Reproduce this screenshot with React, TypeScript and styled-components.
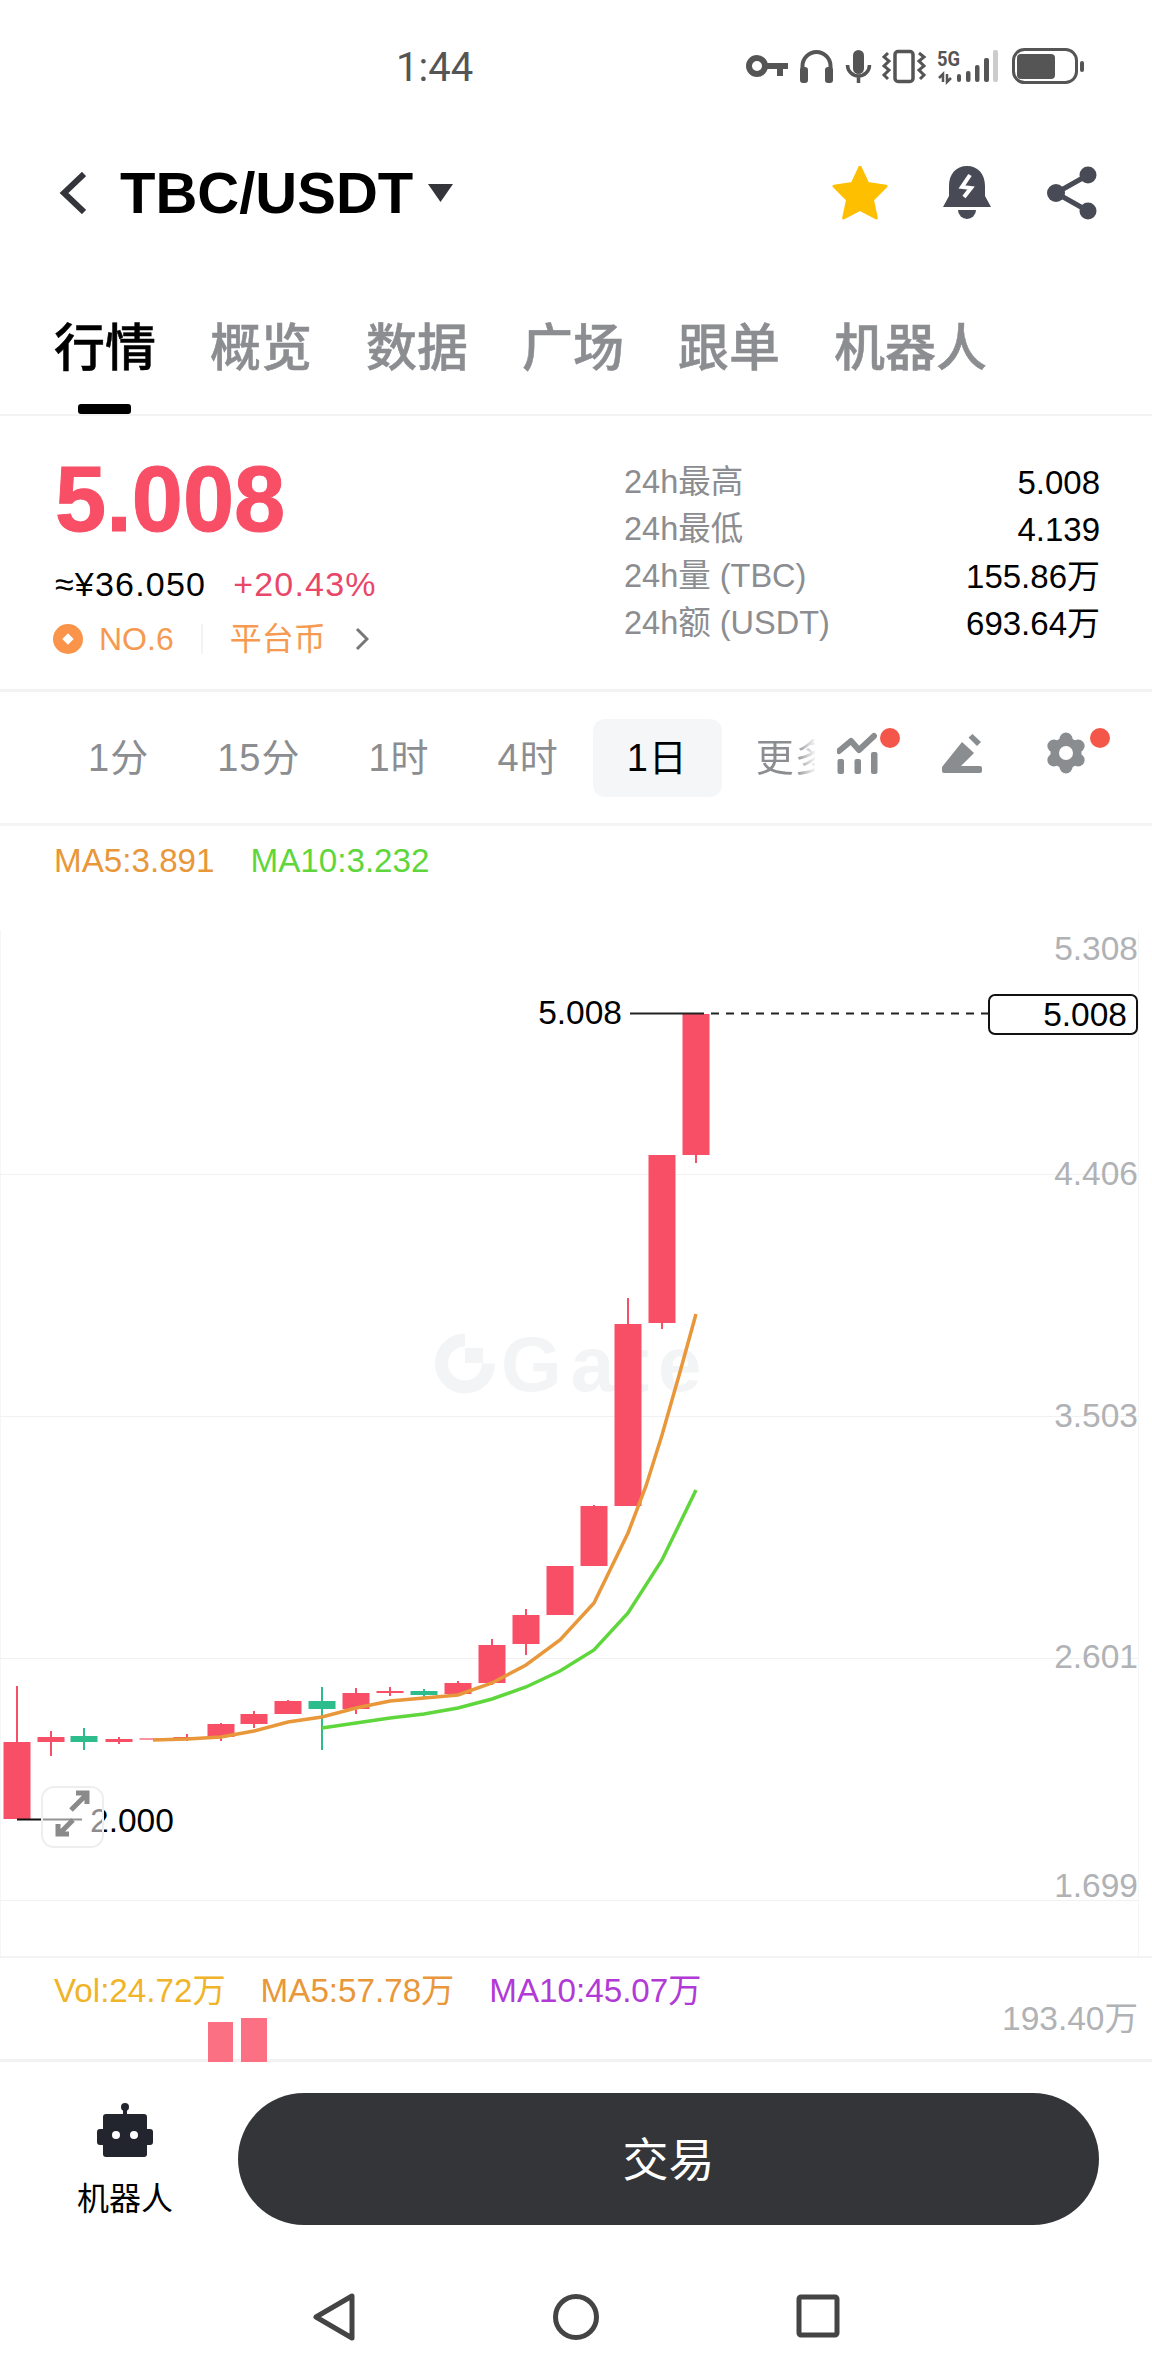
import React from 'react'
import styled, { createGlobalStyle } from 'styled-components'

const RED = '#f84e66'
const GREEN = '#2dbd8c'
const ORANGE = '#e8973a'
const LIME = '#5fd63c'
const TOOL_GREY = '#8a8d90'
const SANS = '"Liberation Sans", "Noto Sans CJK SC", sans-serif'

const GlobalStyle = createGlobalStyle`
  html, body {
    margin: 0;
    padding: 0;
    background: #fff;
    font-family: ${SANS};
  }
  * {
    box-sizing: border-box;
  }
`

const Page = styled.div`
  width: 1152px;
  height: 2376px;
  overflow: hidden;
  background: #fff;
  display: flex;
  flex-direction: column;
`

/* status bar */
const StatusBar = styled.div`
  height: 120px;
  padding: 44px 62px 0 396px;
  display: flex;
  justify-content: space-between;
  align-items: flex-start;
`

const Clock = styled.span`
  font-family: Roboto, sans-serif;
  font-size: 40px;
  line-height: 47px;
  color: #555;
`

const StatusIcons = () => (
  <svg width="345" height="45" viewBox="745 45 345 45" fill="#555">
    {/* key */}
    <circle cx="757" cy="67" r="8" fill="none" stroke="#555" strokeWidth="6" />
    <path d="M766 64h22v6h-5v7h-6v-7h-11z" />
    {/* headphones */}
    <path d="M802.5 72v-5a14 14 0 0 1 28 0v5" fill="none" stroke="#555" strokeWidth="4" />
    <rect x="800" y="68" width="8" height="16" rx="3" />
    <rect x="825" y="68" width="8" height="16" rx="3" />
    {/* mic */}
    <rect x="853" y="51" width="11" height="24" rx="5.5" />
    <path d="M847.5 66a11 11 0 0 0 22 0M858.5 77v7" fill="none" stroke="#555" strokeWidth="3.5" />
    {/* vibrate */}
    <rect x="895" y="52.5" width="18" height="30" rx="3" fill="none" stroke="#555" strokeWidth="3.5" />
    <path
      d="M888 54l-4 4 5 4-5 5 5 4-5 5 4 4M919 54l5 4-5 4 5 5-5 4 5 5-4 4"
      fill="none"
      stroke="#555"
      strokeWidth="3"
    />
    {/* network */}
    <text x="937" y="67" fontFamily="Roboto, sans-serif" fontWeight="700" fontSize="20" textLength="23" lengthAdjust="spacingAndGlyphs">
      5G
    </text>
    <path d="M943 83v-8l-4 4M947 75v8l4-4" fill="none" stroke="#555" strokeWidth="2.5" />
    <rect x="957" y="75" width="4" height="8" rx="2" />
    <rect x="966" y="72" width="4.5" height="11" rx="2" />
    <rect x="975" y="66" width="4.5" height="17" rx="2" />
    <rect x="984" y="59" width="5" height="24" rx="2" />
    <rect x="993" y="51" width="5" height="32" rx="2" fill="#ccc" />
    {/* battery */}
    <rect x="1013.5" y="50.5" width="63" height="33" rx="11" fill="none" stroke="#555" strokeWidth="3" />
    <rect x="1017" y="55" width="38" height="25" rx="4" />
    <rect x="1080" y="62" width="4" height="11" rx="2" />
  </svg>
)

/* header */
const Header = styled.header`
  height: 140px;
  padding: 6px 54px 0 59px;
  display: flex;
  align-items: center;
`

const Pair = styled.h1`
  margin: 0 0 0 34px;
  font-size: 58px;
  line-height: 64px;
  font-weight: 700;
  color: #000;
`

const Actions = styled.div`
  margin-left: auto;
  display: flex;
  align-items: center;
  gap: 55px;
`

const BackIcon = () => (
  <svg width="27" height="42" viewBox="0 0 27 42" fill="none" stroke="#33353a" strokeWidth="6">
    <path d="M25 2L5 21l20 19" />
  </svg>
)

const CaretIcon = () => (
  <svg width="25" height="18" viewBox="0 0 25 18" fill="#33353a" style={{ marginLeft: 15 }}>
    <path d="M0 0h25L12.5 18z" />
  </svg>
)

const StarIcon = () => (
  <svg width="56" height="54" viewBox="0 0 58 56" fill="#fdbf00">
    <path
      d="M29 1l8 17 19 3-14 14 4 19-17-9-17 9 4-19L2 21l19-3z"
      stroke="#fdbf00"
      strokeWidth="3"
      strokeLinejoin="round"
    />
  </svg>
)

const BellIcon = () => (
  <svg width="48" height="54" viewBox="0 0 48 54" fill="#484b55">
    <path d="M24 0c11 0 18 8 18 20v10l6 11H0l6-11V20C6 8 13 0 24 0z" />
    <path d="M15 44h18a9 9 0 0 1-18 0z" />
    <path d="M27 9l-8 12 9 1-7 9" fill="none" stroke="#fff" strokeWidth="4" />
  </svg>
)

const ShareIcon = () => (
  <svg width="52" height="54" viewBox="0 0 52 54" fill="#484b55">
    <path d="M42 9L10 27l32 18" fill="none" stroke="#484b55" strokeWidth="5" />
    <circle cx="42" cy="9" r="8.5" />
    <circle cx="10" cy="27" r="9" />
    <circle cx="42" cy="45" r="8.5" />
  </svg>
)

/* tabs */
const TabBar = styled.nav`
  height: 156px;
  padding: 0 0 0 54px;
  display: flex;
  gap: 54px;
  border-bottom: 2px solid #f3f3f3;
`

const Tab = styled.div<{ $active?: boolean }>`
  position: relative;
  font-size: 51px;
  line-height: 72px;
  padding-top: 53px;
  font-weight: 500;
  -webkit-text-stroke: 0.5px currentColor;
  color: ${(p) => (p.$active ? '#000' : '#8b8d91')};
  ${(p) =>
    p.$active &&
    `
    &::after {
      content: '';
      position: absolute;
      left: 24px;
      bottom: 0;
      width: 53px;
      height: 10px;
      border-radius: 3px;
      background: #000;
    }
  `}
`

/* price summary */
const Summary = styled.section`
  height: 276px;
  padding: 0 52px 0 55px;
  display: flex;
  justify-content: space-between;
  border-bottom: 3px solid #f2f2f2;
`

const PriceColumn = styled.div`
  display: flex;
  flex-direction: column;
`

const Price = styled.div`
  font-size: 92px;
  line-height: 100px;
  font-weight: 700;
  color: ${RED};
  margin-top: 33px;
  -webkit-text-stroke: 1px ${RED};
`

const SubPrice = styled.div`
  margin-top: 10px;
  display: flex;
  gap: 27px;
  font-size: 34px;
  letter-spacing: 1.2px;
  line-height: 50px;
  color: #000;
`

const Change = styled.span`
  color: #e8476a;
`

const Rank = styled.div`
  margin-top: 8px;
  display: flex;
  align-items: center;
  font-size: 32px;
  line-height: 44px;
  color: #f59a50;
`

const RankDot = styled.span`
  width: 30px;
  height: 30px;
  margin: 0 16px 0 -2px;
  border-radius: 50%;
  background: #f9944a;
  display: flex;
  align-items: center;
  justify-content: center;
  &::after {
    content: '';
    width: 8px;
    height: 8px;
    background: #fff;
    transform: rotate(45deg);
  }
`

const RankSep = styled.span`
  width: 2px;
  height: 30px;
  margin: 0 27px;
  background: #f3f3f3;
`

const StatGrid = styled.dl`
  margin: 43px 0 0;
  width: 476px;
  display: grid;
  grid-template-columns: 1fr auto;
  grid-auto-rows: 47px;
  align-items: center;
  line-height: 47px;
`

const StatLabel = styled.dt`
  font-size: 32.5px;
  color: #8b8d91;
`

const StatValue = styled.dd`
  margin: 0;
  font-size: 33px;
  text-align: right;
  color: #000;
`

/* interval toolbar */
const Toolbar = styled.div`
  height: 134px;
  padding: 27px 0 0 54px;
  display: flex;
  align-items: flex-start;
  border-bottom: 3px solid #f4f4f4;
`

const Intervals = styled.div`
  width: 761px;
  height: 78px;
  overflow: hidden;
  display: flex;
`

const Interval = styled.div<{ $active?: boolean; $faded?: boolean }>`
  flex: none;
  height: 78px;
  padding: 0 34px;
  border-radius: 12px;
  font-size: 38px;
  letter-spacing: 1px;
  line-height: 78px;
  color: ${(p) => (p.$active ? '#000' : '#8b8d91')};
  background: ${(p) => (p.$active ? '#f4f6f8' : 'transparent')};
  ${(p) =>
    p.$faded &&
    `
    -webkit-mask-image: linear-gradient(90deg, #000 50%, transparent 65%);
    mask-image: linear-gradient(90deg, #000 50%, transparent 65%);
  `}
`

const Tools = styled.div`
  margin-left: 22px;
  display: flex;
  gap: 40px;
`

const IndicatorIcon = () => (
  <svg width="65" height="66" viewBox="837 725 65 66" fill={TOOL_GREY}>
    <path
      d="M839 757l12-10 8 9 15-14"
      fill="none"
      stroke={TOOL_GREY}
      strokeWidth="6"
      strokeLinecap="round"
      strokeLinejoin="round"
    />
    <rect x="837.5" y="765" width="6.5" height="15" rx="2" />
    <rect x="854.5" y="765" width="6.5" height="15" rx="2" />
    <rect x="871" y="758" width="6.5" height="22" rx="2" />
    <circle cx="890" cy="744" r="10" fill="#f4574a" />
  </svg>
)

const PenIcon = () => (
  <svg width="40" height="66" viewBox="942 725 40 66" fill={TOOL_GREY} style={{ marginRight: 25 }}>
    <path d="M968.5 743.5l4-3.5 8.5 8-4 4zM962 748l12 11-13 13h19a2 2 0 0 1 2 2v3a2 2 0 0 1-2 2h-36a2 2 0 0 1-2-2v-4z" />
  </svg>
)

const gearLobes = [-90, -30, 30, 90, 150, 210]

const GearIcon = () => (
  <svg width="65" height="66" viewBox="1047 725 65 66" fill={TOOL_GREY}>
    <circle cx="1066" cy="759" r="15.5" />
    {gearLobes.map((a) => (
      <circle
        key={a}
        cx={1066 + 14 * Math.cos((a * Math.PI) / 180)}
        cy={759 + 14 * Math.sin((a * Math.PI) / 180)}
        r="6.5"
      />
    ))}
    <circle cx="1066" cy="759" r="7" fill="#fff" />
    <circle cx="1100" cy="744" r="10" fill="#f4574a" />
  </svg>
)

/* chart */
const Legend = styled.div<{ $gap: number }>`
  display: flex;
  gap: ${(p) => p.$gap}px;
  padding-left: 54px;
  font-size: 33.2px;
  line-height: 40px;
`

const LegendItem = styled.span<{ $color: string }>`
  color: ${(p) => p.$color};
`

const MaRow = styled(Legend)`
  height: 76px;
  padding-top: 15px;
`

const CandleChart = styled.svg`
  display: block;
  flex: none;
`

const VolumePanel = styled.div`
  position: relative;
  height: 106px;
  padding-top: 13px;
  border-top: 2px solid #f3f3f3;
  border-bottom: 3px solid #f2f2f2;
`

const VolumeBars = styled.svg`
  position: absolute;
  left: 0;
  top: 0;
`

type Candle = [number, number, number, number, number, boolean?, number?]

// x, body top, body bottom, wick top, wick bottom, falling, opacity
const candles: Candle[] = [
  [17, 1742, 1819, 1686, 1819],
  [51, 1737, 1742, 1731, 1756],
  [84, 1736, 1742, 1728, 1750, true],
  [119, 1739, 1742, 1737, 1744],
  [153, 1738, 1740, 1738, 1740, false, 0.6],
  [187, 1737, 1739, 1734, 1741],
  [221, 1724, 1737, 1723, 1741],
  [254, 1714, 1724, 1711, 1728],
  [288, 1701, 1714, 1700, 1714],
  [322, 1701, 1709, 1687, 1750, true],
  [356, 1693, 1709, 1688, 1714],
  [390, 1691, 1693, 1687, 1696],
  [424, 1691, 1695, 1689, 1697, true],
  [458, 1683, 1694, 1681, 1696],
  [492, 1645, 1683, 1639, 1685],
  [526, 1615, 1644, 1609, 1655],
  [560, 1566, 1615, 1566, 1615],
  [594, 1506, 1566, 1505, 1566],
  [628, 1324, 1506, 1298, 1506],
  [662, 1155, 1323, 1155, 1329],
  [696, 1014, 1155, 1014, 1163],
]

const ma5 =
  '153,1740 187,1739 221,1737 254,1731 288,1722 322,1717 356,1708 390,1701 424,1698 458,1695 492,1683 526,1665 560,1640 594,1603 628,1533 646,1486 662,1435 680,1372 696,1314'
const ma10 =
  '322,1728 356,1723 390,1718 424,1714 458,1708 492,1699 526,1687 560,1671 594,1650 628,1613 662,1560 696,1490'

const gridLines = [1174, 1416, 1658, 1900]
const axisLabels: [string, number][] = [
  ['5.308', 949],
  ['4.406', 1174],
  ['3.503', 1416],
  ['2.601', 1657],
  ['1.699', 1886],
]

const PriceChart = () => (
  <CandleChart width="1152" height="1054" viewBox="0 902 1152 1054" fontFamily={SANS}>
    <path d="M0.5 930V1956M1138.5 930V1956" stroke="#f6f6f6" />
    {gridLines.map((y) => (
      <path key={y} d={`M0 ${y + 0.5}H1138`} stroke="#f1f1f1" />
    ))}
    {/* watermark */}
    <path d="M465 1340a23.5 23.5 0 1 0 23.5 23.5" fill="none" stroke="#f3f4f5" strokeWidth="13" />
    <rect x="465" y="1348" width="18" height="15" fill="#f3f4f5" />
    <text x="501" y="1391" fontSize="78" fontWeight="700" letterSpacing="9" fill="#f3f4f5">
      Gate
    </text>
    {axisLabels.map(([label, y]) => (
      <text key={label} x="1138" y={y + 11} fontSize="33.5" fill="#b0b2b5" textAnchor="end">
        {label}
      </text>
    ))}
    {candles.map(([x, top, bottom, wickTop, wickBottom, falling, opacity]) => {
      const color = falling ? GREEN : RED
      return (
        <g key={x} fill={color} opacity={opacity}>
          <rect x={x - 1} y={wickTop} width="2" height={wickBottom - wickTop} />
          <rect x={x - 13.5} y={top} width="27" height={bottom - top} />
        </g>
      )
    })}
    <polyline points={ma5} fill="none" stroke={ORANGE} strokeWidth="3.5" />
    <polyline points={ma10} fill="none" stroke={LIME} strokeWidth="3.5" />
    {/* high marker */}
    <text x="622" y="1024" fontSize="33.5" fill="#000" textAnchor="end">
      5.008
    </text>
    <path d="M630 1013.5H696" stroke="#222" strokeWidth="2" />
    <path d="M696 1013.5H988" stroke="#222" strokeWidth="2" strokeDasharray="8 7" />
    <rect x="989" y="995" width="148" height="39" rx="6" fill="#fff" stroke="#111" strokeWidth="2" />
    <text x="1127" y="1026" fontSize="33.5" fill="#000" textAnchor="end">
      5.008
    </text>
    {/* low marker */}
    <path d="M17 1819.5H82" stroke="#111" strokeWidth="2" />
    <text x="90" y="1832" fontSize="33.5" fill="#000">
      2.000
    </text>
    {/* expand button */}
    <rect x="42" y="1787" width="61" height="60" rx="12" fill="#fff" fillOpacity="0.55" stroke="#eee" strokeWidth="2" />
    <path
      d="M71 1810l15-15M76 1793h11v11M73 1820l-13 13M58 1824v10h11"
      fill="none"
      stroke="#8a8a8a"
      strokeWidth="5"
    />
  </CandleChart>
)

/* bottom bar */
const BottomBar = styled.div`
  height: 196px;
  padding: 31px 53px 0 0;
  display: flex;
  align-items: flex-start;
`

const BotLink = styled.div`
  width: 238px;
  padding: 10px 0 0 12px;
  display: flex;
  flex-direction: column;
  align-items: center;
  font-size: 32px;
  line-height: 40px;
  color: #000;
  gap: 22px;
`

const TradeButton = styled.button`
  flex: 1;
  height: 132px;
  padding: 0 0 7px;
  border: none;
  border-radius: 66px;
  background: #343538;
  color: #fff;
  font-family: ${SANS};
  font-size: 46px;
`

const RobotIcon = () => (
  <svg width="56" height="54" viewBox="0 0 56 54" fill="#22252e">
    <circle cx="28" cy="4" r="4" />
    <rect x="26" y="4" width="4" height="9" />
    <rect x="6" y="11" width="44" height="43" rx="3" />
    <rect x="0" y="26" width="56" height="16" rx="3" />
    <circle cx="19" cy="32" r="4" fill="#fff" />
    <circle cx="37" cy="32" r="4" fill="#fff" />
  </svg>
)

const NavBar = styled.div`
  flex: 1;
  padding-top: 35px;
  display: flex;
  justify-content: center;
  align-items: flex-start;
  gap: 197px;
`

const NavBack = () => (
  <svg width="44" height="48" viewBox="0 0 44 48" fill="none" stroke="#444" strokeWidth="5" strokeLinejoin="round">
    <path d="M40 3v42L4 24z" />
  </svg>
)

const NavHome = () => (
  <svg width="46" height="48" viewBox="0 0 46 48" fill="none" stroke="#444" strokeWidth="5">
    <circle cx="23" cy="24" r="20.5" />
  </svg>
)

const NavRecent = () => (
  <svg width="44" height="48" viewBox="0 0 44 48" fill="none" stroke="#444" strokeWidth="5">
    <rect x="3" y="4" width="38" height="38" rx="2" />
  </svg>
)

const tabs = ['行情', '概览', '数据', '广场', '跟单', '机器人']
const stats = [
  ['24h最高', '5.008'],
  ['24h最低', '4.139'],
  ['24h量 (TBC)', '155.86万'],
  ['24h额 (USDT)', '693.64万'],
]
const intervals = ['1分', '15分', '1时', '4时', '1日', '更多']

const App = () => (
  <Page>
    <GlobalStyle />
    <StatusBar>
      <Clock>1:44</Clock>
      <StatusIcons />
    </StatusBar>
    <Header>
      <BackIcon />
      <Pair>TBC/USDT</Pair>
      <CaretIcon />
      <Actions>
        <StarIcon />
        <BellIcon />
        <ShareIcon />
      </Actions>
    </Header>
    <TabBar>
      {tabs.map((t, i) => (
        <Tab key={t} $active={i === 0}>
          {t}
        </Tab>
      ))}
    </TabBar>
    <Summary>
      <PriceColumn>
        <Price>5.008</Price>
        <SubPrice>
          <span>≈¥36.050</span>
          <Change>+20.43%</Change>
        </SubPrice>
        <Rank>
          <RankDot />
          NO.6
          <RankSep />
          平台币
          <svg width="14" height="24" viewBox="0 0 14 24" fill="none" stroke="#777" strokeWidth="3" style={{ marginLeft: 29 }}>
            <path d="M2 2l10 10L2 22" />
          </svg>
        </Rank>
      </PriceColumn>
      <StatGrid>
        {stats.map(([label, value]) => (
          <React.Fragment key={label}>
            <StatLabel>{label}</StatLabel>
            <StatValue>{value}</StatValue>
          </React.Fragment>
        ))}
      </StatGrid>
    </Summary>
    <Toolbar>
      <Intervals>
        {intervals.map((t) => (
          <Interval key={t} $active={t === '1日'} $faded={t === '更多'}>
            {t}
          </Interval>
        ))}
      </Intervals>
      <Tools>
        <IndicatorIcon />
        <PenIcon />
        <GearIcon />
      </Tools>
    </Toolbar>
    <MaRow $gap={36}>
      <LegendItem $color={ORANGE}>MA5:3.891</LegendItem>
      <LegendItem $color={LIME}>MA10:3.232</LegendItem>
    </MaRow>
    <PriceChart />
    <VolumePanel>
      <VolumeBars width="1152" height="104" viewBox="0 1958 1152 104" fontFamily={SANS}>
        <rect x="208" y="2022" width="25" height="40" fill="#fb7082" />
        <rect x="241" y="2018" width="26" height="44" fill="#fb7082" />
        <text x="1138" y="2030" fontSize="33.5" fill="#b0b2b5" textAnchor="end">
          193.40万
        </text>
      </VolumeBars>
      <Legend $gap={35}>
        <LegendItem $color="#f0b429">Vol:24.72万</LegendItem>
        <LegendItem $color={ORANGE}>MA5:57.78万</LegendItem>
        <LegendItem $color="#b13ad6">MA10:45.07万</LegendItem>
      </Legend>
    </VolumePanel>
    <BottomBar>
      <BotLink>
        <RobotIcon />
        机器人
      </BotLink>
      <TradeButton>交易</TradeButton>
    </BottomBar>
    <NavBar>
      <NavBack />
      <NavHome />
      <NavRecent />
    </NavBar>
  </Page>
)

export default App
